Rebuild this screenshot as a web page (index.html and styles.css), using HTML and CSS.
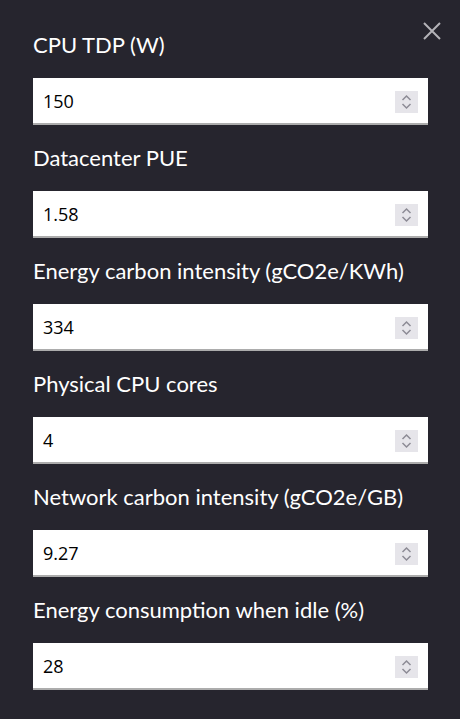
FILE: index.html
```html
<!DOCTYPE html>
<html>
<head>
<meta charset="utf-8">
<link rel="stylesheet" href="styles.css">
</head>
<body>
<div class="panel">
  <button class="close" aria-label="Close">
    <svg width="18" height="18" viewBox="0 0 18 18"><path d="M1 1 L17 17 M17 1 L1 17" stroke="#b4b3b8" stroke-width="2" fill="none"/></svg>
  </button>
  <div class="field">
    <label class="label">CPU TDP (W)</label>
    <div class="input"><span class="value">150</span><span class="spin"><svg width="11" height="16" viewBox="0 0 11 16"><path d="M1.5 6 L5.5 2 L9.5 6 M1.5 10 L5.5 14 L9.5 10" stroke="#8c8b95" stroke-width="1.5" fill="none"/></svg></span></div>
  </div>
  <div class="field">
    <label class="label">Datacenter PUE</label>
    <div class="input"><span class="value">1.58</span><span class="spin"><svg width="11" height="16" viewBox="0 0 11 16"><path d="M1.5 6 L5.5 2 L9.5 6 M1.5 10 L5.5 14 L9.5 10" stroke="#8c8b95" stroke-width="1.5" fill="none"/></svg></span></div>
  </div>
  <div class="field">
    <label class="label">Energy carbon intensity (gCO2e/KWh)</label>
    <div class="input"><span class="value">334</span><span class="spin"><svg width="11" height="16" viewBox="0 0 11 16"><path d="M1.5 6 L5.5 2 L9.5 6 M1.5 10 L5.5 14 L9.5 10" stroke="#8c8b95" stroke-width="1.5" fill="none"/></svg></span></div>
  </div>
  <div class="field">
    <label class="label">Physical CPU cores</label>
    <div class="input"><span class="value">4</span><span class="spin"><svg width="11" height="16" viewBox="0 0 11 16"><path d="M1.5 6 L5.5 2 L9.5 6 M1.5 10 L5.5 14 L9.5 10" stroke="#8c8b95" stroke-width="1.5" fill="none"/></svg></span></div>
  </div>
  <div class="field">
    <label class="label">Network carbon intensity (gCO2e/GB)</label>
    <div class="input"><span class="value">9.27</span><span class="spin"><svg width="11" height="16" viewBox="0 0 11 16"><path d="M1.5 6 L5.5 2 L9.5 6 M1.5 10 L5.5 14 L9.5 10" stroke="#8c8b95" stroke-width="1.5" fill="none"/></svg></span></div>
  </div>
  <div class="field">
    <label class="label">Energy consumption when idle (%)</label>
    <div class="input"><span class="value">28</span><span class="spin"><svg width="11" height="16" viewBox="0 0 11 16"><path d="M1.5 6 L5.5 2 L9.5 6 M1.5 10 L5.5 14 L9.5 10" stroke="#8c8b95" stroke-width="1.5" fill="none"/></svg></span></div>
  </div>
</div>
</body>
</html>
```
FILE: styles.css
```css
html, body {
  margin: 0;
  padding: 0;
  background: #26252e;
  height: 100%;
}
.panel {
  position: relative;
  padding: 31px 32px 0 33px;
  display: flex;
  flex-direction: column;
  gap: 19px;
}
.close {
  position: absolute;
  top: 21px;
  right: 18px;
  width: 20px;
  height: 20px;
  padding: 1px;
  border: 0;
  background: none;
  display: flex;
  align-items: center;
  justify-content: center;
}
.field {
  display: flex;
  flex-direction: column;
  gap: 19px;
}
.label {
  font-family: Lato, sans-serif;
  font-size: 22px;
  line-height: 28px;
  color: #ffffff;
}
.input {
  height: 45px;
  background: #ffffff;
  border-bottom: 2px solid #acacac;
  display: flex;
  align-items: center;
  justify-content: space-between;
  padding: 0 10px;
}
.value {
  font-family: "Open Sans", sans-serif;
  font-size: 18px;
  color: #000;
}
.spin {
  width: 23px;
  height: 22px;
  background: #e6e5ea;
  display: flex;
  align-items: center;
  justify-content: center;
  margin-top: 2px;
}
```
